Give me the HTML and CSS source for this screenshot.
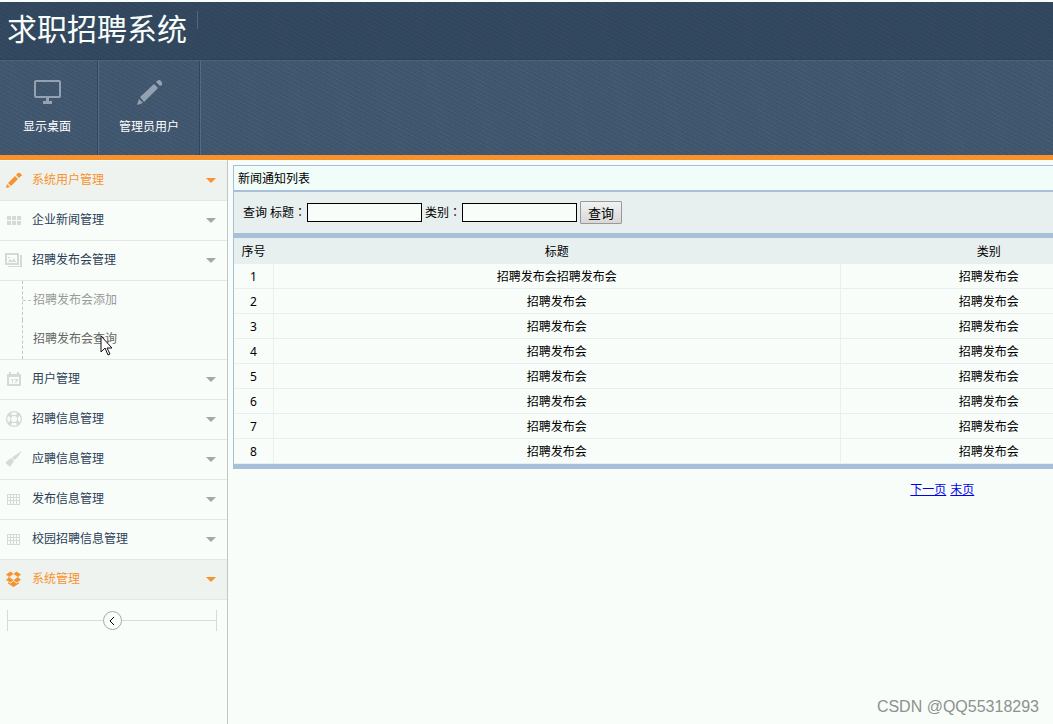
FILE: index.html
```html
<!DOCTYPE html>
<html lang="zh-CN">
<head>
<meta charset="utf-8">
<title>求职招聘系统</title>
<link rel="stylesheet" href="styles.css">
</head>
<body>
<header class="header">
  <div class="brand"><h1 class="brand-title">求职招聘系统</h1></div>
  <nav class="toolbar">
    <a class="tool" href="#">
      <svg class="tool-icon" width="28" height="28" viewBox="0 0 28 28"><rect x="2" y="3" width="25" height="16" rx="1" fill="none" stroke="currentColor" stroke-width="2"/><path d="M13 19h3v4h3v3h-9v-3h3z" fill="currentColor"/></svg>
      <span>显示桌面</span>
    </a>
    <a class="tool tool-wide" href="#">
      <svg class="tool-icon" width="28" height="28" viewBox="0 0 28 28"><path d="M2 27l2-6 4 4zM5 19L19 6l4 4L9 24zM21 4l1-1q2-2 4 0t1 4l-2 1z" fill="currentColor"/></svg>
      <span>管理员用户</span>
    </a>
  </nav>
</header>
<div class="layout">
  <aside class="sidebar">
    <ul class="menu">
      <li><a class="menu-item active" href="#"><svg class="menu-icon" width="16" height="16" viewBox="0 0 16 16"><path d="M0 16l1-4 3 3zM2 11l7-7 3 3-7 7zM10 3l2-2q1-1 3 1t0 2l-2 2z" fill="currentColor"/></svg><span class="menu-label">系统用户管理</span></a></li>
      <li><a class="menu-item" href="#"><svg class="menu-icon" width="16" height="16" viewBox="0 0 16 16"><path d="M1 4h4v4H1zM6 4h4v4H6zM11 4h4v4h-4zM1 9h4v4H1zM6 9h4v4H6zM11 9h4v4h-4z" fill="currentColor"/></svg><span class="menu-label">企业新闻管理</span></a></li>
      <li><a class="menu-item" href="#"><svg class="menu-icon menu-icon-wide" width="17" height="16" viewBox="0 0 17 16"><path d="M0 1h14v12H0zM2 3v8h10V3zM15 3h2v12H3v-1h12z" fill="currentColor" fill-rule="evenodd"/><path d="M3 10l2-3 2 2 2-3 2 4zM3 5h2v1H3z" fill="currentColor"/></svg><span class="menu-label">招聘发布会管理</span></a>
        <ul class="submenu">
          <li><a class="submenu-item dim" href="#">招聘发布会添加</a></li>
          <li><a class="submenu-item" href="#">招聘发布会查询<svg class="pointer" width="13" height="21" viewBox="0 0 13 21"><path d="M1 1v16l4-4 3 7 2-1-3-6h5z" fill="#fff" stroke="#111"/></svg></a></li>
        </ul>
      </li>
      <li><a class="menu-item" href="#"><svg class="menu-icon" width="16" height="16" viewBox="0 0 16 16"><path d="M1 3h2V1h2v2h6V1h2v2h2v12H1zM3 6v7h10V6z" fill="currentColor" fill-rule="evenodd"/><path d="M5 8h2v4H6V9H5zM8 8h4v1l-2 3H9l1-3H8z" fill="currentColor"/></svg><span class="menu-label">用户管理</span></a></li>
      <li><a class="menu-item" href="#"><svg class="menu-icon" width="16" height="16" viewBox="0 0 16 16"><circle cx="8" cy="8" r="8" fill="currentColor"/><g fill="#f8fdf9"><circle cx="8" cy="8" r="3"/><path d="M5 2q3-1.500 6 0L10 4H6zM5 14q3 1.500 6 0l-1-2H6zM2 5q-1.500 3 0 6l2-1V6zM14 5q1.500 3 0 6l-2-1V6z"/></g></svg><span class="menu-label">招聘信息管理</span></a></li>
      <li><a class="menu-item" href="#"><svg class="menu-icon" width="16" height="16" viewBox="0 0 16 16"><path d="M16 0l-5 7-3 2-2-2 2-2zM5 7l3 3-4 6-1-2-1 1-1-2-1 0v-2z" fill="currentColor"/></svg><span class="menu-label">应聘信息管理</span></a></li>
      <li><a class="menu-item" href="#"><svg class="menu-icon" width="16" height="16" viewBox="0 0 16 16"><path d="M1.500 3v11M4.500 3v11M7.500 3v11M10.500 3v11M13.500 3v11M1 3.500h13M1 6.500h13M1 9.500h13M1 13.500h13" stroke="currentColor" fill="none"/></svg><span class="menu-label">发布信息管理</span></a></li>
      <li><a class="menu-item" href="#"><svg class="menu-icon" width="16" height="16" viewBox="0 0 16 16"><path d="M1.500 3v11M4.500 3v11M7.500 3v11M10.500 3v11M13.500 3v11M1 3.500h13M1 6.500h13M1 9.500h13M1 13.500h13" stroke="currentColor" fill="none"/></svg><span class="menu-label">校园招聘信息管理</span></a></li>
      <li><a class="menu-item active" href="#"><svg class="menu-icon" width="16" height="16" viewBox="0 0 16 16"><path d="M4.500 0.500L7.500 3 3 6 0 3.500zM10.500 0.500L7.500 3 12 6l3-2.500zM3 6l4.500 3L4.500 11.500 0 9zM12 6L7.500 9l3 2.500L15 9zM2 11l2.500 1.500 3-2.500 3 2.500L13 11v1.500L7.500 16 2 12.500z" fill="currentColor"/></svg><span class="menu-label">系统管理</span></a></li>
    </ul>
    <div class="collapse">
      <button class="collapse-button" type="button" aria-label="收起"><svg width="8" height="10" viewBox="0 0 8 10"><path d="M6 1L2 5l4 4" fill="none" stroke="#000"/></svg></button>
    </div>
  </aside>
  <main class="content">
    <div class="sheet">
      <section class="panel">
        <h2 class="panel-title">新闻通知列表</h2>
        <form class="search">
          <span>查询</span>
          <label for="title">标题<span class="colon" lang="zh-TW">：</span></label><input class="field" id="title" type="text">
          <label for="kind">类别<span class="colon" lang="zh-TW">：</span></label><input class="field" id="kind" type="text">
          <button class="search-button" type="button">查询</button>
        </form>
        <table class="list">
          <colgroup><col class="col-number"><col class="col-title"><col class="col-kind"><col></colgroup>
          <thead><tr><th>序号</th><th>标题</th><th>类别</th><td></td></tr></thead>
          <tbody>
            <tr><td>1</td><td>招聘发布会招聘发布会</td><td>招聘发布会</td><td></td></tr>
            <tr><td>2</td><td>招聘发布会</td><td>招聘发布会</td><td></td></tr>
            <tr><td>3</td><td>招聘发布会</td><td>招聘发布会</td><td></td></tr>
            <tr><td>4</td><td>招聘发布会</td><td>招聘发布会</td><td></td></tr>
            <tr><td>5</td><td>招聘发布会</td><td>招聘发布会</td><td></td></tr>
            <tr><td>6</td><td>招聘发布会</td><td>招聘发布会</td><td></td></tr>
            <tr><td>7</td><td>招聘发布会</td><td>招聘发布会</td><td></td></tr>
            <tr><td>8</td><td>招聘发布会</td><td>招聘发布会</td><td></td></tr>
          </tbody>
        </table>
      </section>
      <nav class="pager"><a href="#">下一页</a><a href="#">末页</a></nav>
    </div>
  </main>
</div>
<div class="watermark">CSDN @QQ55318293</div>
</body>
</html>
```
FILE: styles.css
```css
* { box-sizing: border-box; }

body {
  margin: 0;
  padding-top: 2px;
  height: 100vh;
  display: flex;
  flex-direction: column;
  overflow: hidden;
  position: relative;
  background: #f8fdf9;
  color: #000;
  font: 12px/18px "Noto Sans", "Noto Sans CJK SC", sans-serif;
}

ul { list-style: none; margin: 0; padding: 0; }

/* Header */
.header {
  border-bottom: 5px solid #f7922d;
  background-color: #40576f;
  background-image:
    repeating-linear-gradient(27deg, rgba(255, 255, 255, 0.03) 0 1px, transparent 1px 4px),
    repeating-linear-gradient(-31deg, rgba(0, 0, 0, 0.05) 0 1px, transparent 1px 3px);
}

.brand {
  display: flex;
  align-items: flex-start;
  height: 58px;
  padding: 9px 7px;
  background: rgba(31, 49, 73, 0.4);
  border-bottom: 1px solid #2b4059;
}

.brand-title {
  margin: 0;
  padding-right: 11px;
  color: #f8fdf9;
  font-size: 30px;
  font-weight: 400;
  line-height: 36px;
  background: linear-gradient(#536880, #536880) right top / 1px 18px no-repeat;
}

.toolbar {
  display: flex;
  border-top: 1px solid #4d647f;
}

.tool {
  display: flex;
  flex-direction: column;
  align-items: center;
  gap: 12px;
  min-width: 99px;
  height: 94px;
  padding: 17px 27px 0 23px;
  border-right: 1px solid #536b83;
  box-shadow: inset -1px 0 #30465f;
  color: #fff;
  text-decoration: none;
}

.tool-wide { padding: 17px 21px 0 20px; }
.tool-icon { color: #93a1b1; }

/* Layout */
.layout { flex: 1; display: flex; min-height: 0; }

.sidebar {
  flex: none;
  width: 228px;
  padding-top: 1px;
  border-right: 1px solid #c0c7c2;
}

.menu-item {
  display: grid;
  grid-template-columns: 26px 1fr auto;
  align-items: center;
  height: 40px;
  padding: 0 11px 1px 6px;
  border-bottom: 1px solid #e3e8e5;
  color: #2c3d57;
  text-decoration: none;
}

.menu-item::after {
  content: "";
  border: 5px solid transparent;
  border-top-color: #a6a6a6;
  border-bottom: 0;
}

.menu-label { padding-bottom: 1px; }
.menu-icon { color: #d6d9d7; }
.menu-icon-wide { margin-left: -1px; }
.active { background: #eff3f0; color: #f7922d; }
.active .menu-icon { color: #f7922d; }
.active::after { border-top-color: #f7922d; }

.submenu {
  padding-left: 22px;
  border-bottom: 1px solid #e3e8e5;
}

.submenu-item {
  display: flex;
  align-items: center;
  position: relative;
  height: 39px;
  padding: 0 0 2px 10px;
  border-left: 1px dashed #c2c7c4;
  color: #666;
  text-decoration: none;
}

.dim {
  color: #999;
  background: repeating-linear-gradient(90deg, #c2c7c4 0 3px, transparent 3px 5px) left center / 9px 1px no-repeat;
}

.pointer { position: absolute; left: 77px; top: 15px; }

.collapse {
  display: flex;
  justify-content: center;
  align-items: center;
  height: 21px;
  margin: 10px 10px 0 7px;
  border: solid #d7dbd8;
  border-width: 0 1px;
  background: linear-gradient(#d7dbd8, #d7dbd8) center / 100% 1px no-repeat;
}

.collapse-button {
  display: flex;
  align-items: center;
  justify-content: center;
  width: 19px;
  height: 19px;
  padding: 0;
  border: 1px solid #aaa;
  border-radius: 50%;
  background: #f8fdf9;
}

/* Content */
.content { flex: 1; min-width: 0; padding: 5px 0 0 5px; overflow: hidden; }

/* The list is wider than the frame and runs past its right edge. */
.sheet { width: 173%; }

.panel {
  border: 1px solid #a8bfda;
  border-bottom-width: 5px;
}

.panel-title {
  margin: 0;
  padding: 4px 4px 2px;
  background: #f0fdf9;
  font-size: 12px;
  font-weight: 400;
  line-height: 18px;
}

.search {
  display: flex;
  align-items: center;
  gap: 3px;
  height: 48px;
  padding: 0 9px;
  border-top: 2px solid #a8bfda;
  border-bottom: 5px solid #a8bfda;
  background: #e8efef;
}

.colon { font-family: "Noto Sans CJK TC", sans-serif; }

.search label { margin-right: -2px; }

.field {
  width: 115px;
  height: 19px;
  padding: 0 2px;
  border: 1px solid #000;
  background: #f8fdf9;
  font: inherit;
}

.search-button {
  width: 42px;
  height: 23px;
  padding: 0;
  border: 1px solid #999;
  border-radius: 1px;
  background: linear-gradient(#f2f2f2, #d8d8d8);
  font: 13px/18px "Noto Sans CJK SC", sans-serif;
}

.list {
  width: 100%;
  table-layout: fixed;
  border-collapse: separate;
  border-spacing: 0;
  text-align: center;
}

.col-number { width: 40px; }
.col-title { width: 40%; }
.col-kind { width: 21%; }

.list th, .list td {
  height: 25px;
  padding: 2px 0 0;
  font-weight: 400;
  border: solid #e8efef;
  border-width: 0 1px 1px 0;
}

.list thead th, .list thead td { height: 26px; background: #e8efef; }

.pager {
  display: flex;
  justify-content: center;
  gap: 4px;
  margin-top: 12px;
}

.pager a { color: #00e; }

.watermark {
  position: absolute;
  right: 14px;
  bottom: 7px;
  color: #8d918f;
  font: 16px/20px "Liberation Sans", sans-serif;
}
```
